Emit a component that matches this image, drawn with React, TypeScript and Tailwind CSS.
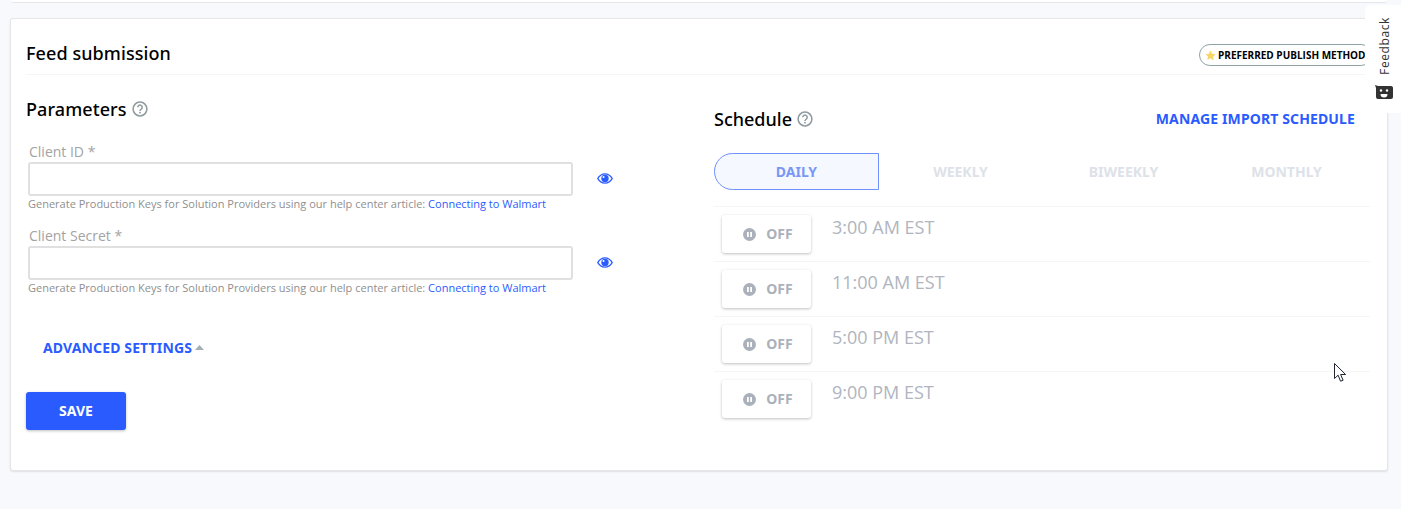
const FONT = "font-['Open_Sans','Noto_Sans',sans-serif]"
const NOTO = "font-['Noto_Sans','Open_Sans',sans-serif]"

function HelpIcon() {
  return (
    <svg width="16" height="16" viewBox="0 0 16 16" fill="none" className="shrink-0">
      <circle cx="8" cy="8" r="6.900" stroke="#8f9a9e" strokeWidth="1.500" />
      <path d="M5.800 6.300a2.200 2.200 0 1 1 3.500 1.800c-.8.500-1.300.9-1.300 1.800" stroke="#8f9a9e" strokeWidth="1.500" />
      <circle cx="8" cy="11.700" r="0.900" fill="#8f9a9e" />
    </svg>
  )
}

function EyeIcon() {
  return (
    <svg width="16" height="11" viewBox="0 0 16 11">
      <path d="M0 5.500C1.800 2.200 4.700.2 8 .2s6.200 2 8 5.300c-1.800 3.300-4.700 5.300-8 5.300S1.800 8.800 0 5.500zm1.600 0C3.100 8 5.400 9.500 8 9.500s4.900-1.500 6.400-4C12.900 3 10.600 1.500 8 1.500S3.100 3 1.600 5.500z" fill="#2a5bff" />
      <circle cx="8" cy="5.400" r="3.700" fill="#2a5bff" />
      <circle cx="6.500" cy="3.900" r="1" fill="#fff" />
    </svg>
  )
}

function Field({ label }: { label: string }) {
  return (
    <div className="h-[84px] pl-[2px]">
      <label className="block h-[20px] pl-[1px] text-[14px] leading-[20px] text-[#a3a3a3]">{label}</label>
      <div className="flex items-center">
        <input className="h-[34px] w-[545px] rounded-[3px] border-2 border-[#e0e0e0] bg-white" />
        <span className="mb-[2px] ml-[24px] flex"><EyeIcon /></span>
      </div>
      <p className="text-[11px] leading-[16px] text-[#8f8f8f]">
        Generate Production Keys for Solution Providers using our help center article:{' '}
        <a className="text-[#2a5bff]">Connecting to Walmart</a>
      </p>
    </div>
  )
}

const TIMES = ['3:00 AM EST', '11:00 AM EST', '5:00 PM EST', '9:00 PM EST']

function ScheduleRow({ time }: { time: string }) {
  return (
    <div className="flex h-[55px] items-start border-t border-[#f5f5f5] pl-[8px] pt-[8px]">
      <button className="flex h-[38px] w-[89px] items-center justify-center gap-[10px] rounded-[3px] bg-white pl-[3px] shadow-[0_1px_3px_rgba(0,0,0,0.25)]">
        <svg width="13" height="13" viewBox="0 0 13 13">
          <circle cx="6.500" cy="6.500" r="6.500" fill="#abb1bb" />
          <rect x="4" y="4" width="1.800" height="5" fill="#fff" />
          <rect x="7.200" y="4" width="1.800" height="5" fill="#fff" />
        </svg>
        <span className={`text-[14px] font-bold leading-none text-[#abb1bb] ${NOTO}`}>OFF</span>
      </button>
      <span className="ml-[21px] mt-[-1px] text-[18px] leading-[26px] text-[#b0b5c0]">{time}</span>
    </div>
  )
}

export default function App() {
  return (
    <div className={`h-[509px] overflow-hidden bg-[#f8f9fd] ${FONT}`}>
      <div className="ml-[11px] mr-[14px] h-[3px] rounded-b-[3px] border-b border-[#e6e6e8] bg-white" />

      <div className="ml-[10px] mr-[13px] mt-[15px] h-[453px] rounded-[3px] border border-[#e6e6e8] bg-white pl-[15px] pr-[17px] shadow-[0_1px_2px_rgba(0,0,0,0.1)]">
        <div className="flex h-[56px] items-center justify-between border-b border-[#f5f5f5] pt-[12px]">
          <h2 className={`text-[18px] font-medium leading-[24px] tracking-[0.08px] text-black ${NOTO}`}>Feed submission</h2>
          <span className="-mr-[2px] mt-[5px] flex h-[22px] w-[173px] items-center whitespace-nowrap rounded-full border border-[#8fa3a3] pl-[5px] pt-[1px] text-[10px] font-bold text-black">
            <svg width="11" height="11" viewBox="0 0 24 24" className="mr-[2px] shrink-0">
              <path d="M12 1l3.400 7.300 7.900 1-5.800 5.500 1.500 7.900L12 17.900l-7 3.800 1.500-7.900L.7 9.300l7.900-1z" fill="#f8d568" />
            </svg>
            PREFERRED PUBLISH METHOD
          </span>
        </div>

        <div className="flex">
          <div className="w-[688px] shrink-0 pt-[22px]">
            <div className="flex items-center gap-[5px]">
              <h3 className={`text-[18px] font-medium leading-[24px] tracking-[0.08px] text-black ${NOTO}`}>Parameters</h3>
              <HelpIcon />
            </div>
            <div className="mt-[21px]">
              <Field label="Client ID *" />
              <Field label="Client Secret *" />
            </div>
            <button className={`ml-[17px] mt-[25px] flex h-[24px] items-center gap-[3px] text-[14px] font-bold tracking-[0.13px] text-[#2a5bff] ${NOTO}`}>
              ADVANCED SETTINGS
              <svg width="9" height="5" viewBox="0 0 9 5"><path d="M4.500 0L9 5H0z" fill="#a3b0b5" /></svg>
            </button>
            <button className={`mt-[33px] h-[38px] w-[100px] rounded-[3px] bg-[#2a5bff] pb-[2px] text-[14px] font-bold text-white shadow-[0_1px_3px_rgba(0,0,0,0.25)] ${NOTO}`}>
              SAVE
            </button>
          </div>

          <div className="min-w-0 flex-1 pt-[32px]">
            <div className="flex items-center justify-between pr-[15px]">
              <div className="flex items-center gap-[5px]">
                <h3 className={`text-[18px] font-medium leading-[24px] text-black ${NOTO}`}>Schedule</h3>
                <HelpIcon />
              </div>
              <a className={`text-[14px] font-bold leading-[24px] tracking-[0.13px] text-[#2a5bff] ${NOTO}`}>MANAGE IMPORT SCHEDULE</a>
            </div>
            <div className={`mt-[22px] flex h-[38px] pb-[1px] text-[14px] font-bold ${NOTO}`}>
              <div className="flex w-[165px] items-center justify-center rounded-l-full border border-[#6f91ff] bg-[#f5f8ff] text-[#7a97f5]">DAILY</div>
              <div className="flex w-[163px] items-center justify-center text-[#dde2e8]">WEEKLY</div>
              <div className="flex w-[163px] items-center justify-center text-[#dde2e8]">BIWEEKLY</div>
              <div className="flex w-[163px] items-center justify-center text-[#dde2e8]">MONTHLY</div>
            </div>
            <div className="mt-[15px]">
              {TIMES.map((t) => <ScheduleRow key={t} time={t} />)}
            </div>
          </div>
        </div>
      </div>

      {/* Feedback tab */}
      <div className="absolute left-[1365px] top-[5px] flex h-[108px] w-[36px] flex-col items-center rounded-tl-[6px] bg-white pl-[4px] pt-[12px]">
        <span className="rotate-180 text-[12px] leading-[16px] tracking-[0.6px] text-[#333] [writing-mode:vertical-rl]">Feedback</span>
        <svg width="18" height="14" viewBox="0 0 18 14" className="-ml-[2px] mt-[10px]">
          <path d="M0 0l3 1h13a2 2 0 0 1 2 1.500V12a2 2 0 0 1-2 2H3a2 2 0 0 1-2-2V3z" fill="#333" />
          <circle cx="6" cy="5.500" r="1.200" fill="#fff" />
          <circle cx="12" cy="5.500" r="1.200" fill="#fff" />
          <path d="M5.500 9h7a3.500 3.500 0 0 1-7 0z" fill="#fff" />
        </svg>
      </div>

      {/* Mouse pointer */}
      <svg width="13" height="20" viewBox="0 0 13 20" className="absolute left-[1334px] top-[363px]">
        <path d="M.5.500v15l3.600-3.300 2.400 6 2.600-1-2.500-5.700h5z" fill="#fff" stroke="#1f2430" strokeWidth="1" />
      </svg>
    </div>
  )
}
